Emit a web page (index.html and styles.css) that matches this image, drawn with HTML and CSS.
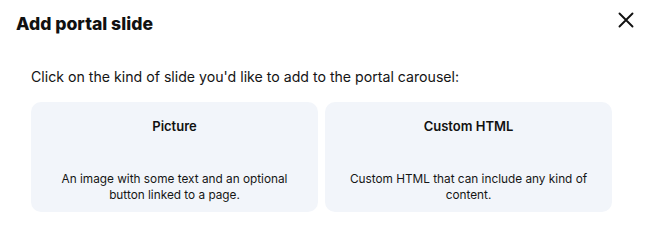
FILE: index.html
```html
<!DOCTYPE html>
<html lang="en">
<head>
<meta charset="utf-8">
<title>Add portal slide</title>
<link rel="stylesheet" href="styles.css">
</head>
<body>
<div class="dialog">
  <div class="header">
    <h1 class="title">Add portal slide</h1>
    <button class="close" aria-label="Close">
      <svg width="16" height="16" viewBox="0 0 16 16" fill="none" stroke="#111" stroke-width="1.9" stroke-linecap="round">
        <path d="M1.5 1.5 L14.5 14.5 M14.5 1.5 L1.5 14.5"/>
      </svg>
    </button>
  </div>
  <p class="prompt">Click on the kind of slide you'd like to add to the portal carousel:</p>
  <div class="cards">
    <div class="card">
      <div class="card-title">Picture</div>
      <div class="card-desc">An image with some text and an optional button linked to a page.</div>
    </div>
    <div class="card">
      <div class="card-title">Custom HTML</div>
      <div class="card-desc">Custom HTML that can include any kind of content.</div>
    </div>
  </div>
</div>
</body>
</html>
```
FILE: styles.css
```css
* { box-sizing: border-box; }
body {
  margin: 0;
  background: #fff;
  font-family: Inter, "Open Sans", sans-serif;
  color: #151515;
}
.dialog {
  width: 646px;
  height: 243px;
}
.header {
  display: flex;
  justify-content: space-between;
  align-items: flex-start;
  padding: 12px 12px 0 16px;
}
.title {
  margin: 0;
  font-size: 17.6px;
  line-height: 24px;
  font-weight: 800;
  color: #111;
}
.close {
  border: 0;
  background: none;
  padding: 0;
  margin-top: 0;
  width: 16px;
  height: 16px;
  display: flex;
}
.prompt {
  margin: 31px 0 0 31px;
  font-size: 14.15px;
  line-height: 20px;
}
.cards {
  display: grid;
  grid-template-columns: 287px 287px;
  gap: 7px;
  margin: 15px 0 0 31px;
}
.card {
  height: 110px;
  background: #f2f5fa;
  border-radius: 10px;
  padding: 14px 24px 9px;
  display: flex;
  flex-direction: column;
  text-align: center;
}
.card-title {
  font-size: 13px;
  line-height: 20px;
  font-weight: 600;
  color: #111;
}
.card-desc {
  margin-top: auto;
  font-size: 11.8px;
  line-height: 16px;
}
```
